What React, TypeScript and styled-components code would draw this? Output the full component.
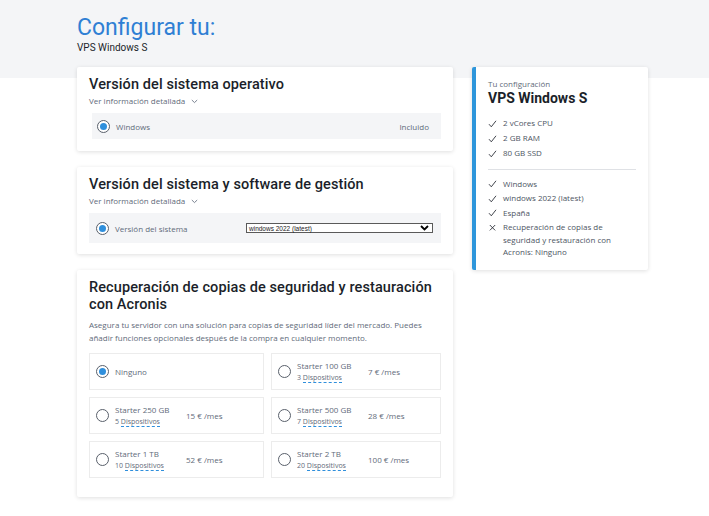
import React from "react";
import styled, { createGlobalStyle } from "styled-components";

const GlobalStyle = createGlobalStyle`
  html, body { margin: 0; padding: 0; background: #ffffff; }
  body { font-family: "Open Sans", "Noto Sans", sans-serif; color: #1b1f2a; }
  * { box-sizing: border-box; }
`;

const Page = styled.div`
  width: 709px;
  min-height: 516px;
`;

const Hero = styled.header`
  height: 78px;
  background: #f4f5f7;
  padding: 14px 0 0 77px;
`;

const HeroTitle = styled.h1`
  margin: 0;
  font-family: Roboto, "Noto Sans", sans-serif;
  font-weight: 400;
  font-size: 23px;
  line-height: 28px;
  color: #2f7fd4;
`;

const HeroSub = styled.div`
  font-family: Roboto, "Noto Sans", sans-serif;
  font-size: 10px;
  line-height: 12px;
  color: #1b1f2a;
`;

const Main = styled.main`
  display: flex;
  align-items: flex-start;
  gap: 19px;
  margin-top: -11px;
  padding-left: 77px;
`;

const LeftCol = styled.div`
  width: 376px;
  display: flex;
  flex-direction: column;
  gap: 16px;
`;

const Card = styled.section<{ $bottom?: number }>`
  background: #fff;
  border-radius: 2px;
  box-shadow: 0 1px 4px rgba(0, 0, 0, 0.13);
  padding: 9px 12px ${(p) => p.$bottom ?? 12}px 12px;
`;

const CardTitle = styled.h2`
  margin: 0;
  font-family: Roboto, "Noto Sans", sans-serif;
  font-weight: 500;
  font-size: 14.5px;
  line-height: 17px;
  color: #1b1f2a;
  letter-spacing: 0.1px;
`;

const InfoToggle = styled.div`
  margin-top: 2px;
  display: flex;
  align-items: center;
  gap: 6px;
  font-size: 8px;
  line-height: 12px;
  color: #5f6b7a;
`;

const OptionRow = styled.div<{ $indent?: number; $height: number; $padLeft: number }>`
  margin-top: 6px;
  margin-left: ${(p) => p.$indent ?? 0}px;
  height: ${(p) => p.$height}px;
  background: #f4f5f7;
  display: flex;
  align-items: center;
  gap: 6px;
  padding: 0 12px 0 ${(p) => p.$padLeft}px;
  font-size: 8px;
  color: #5f6b7a;
`;

const RightText = styled.span`
  margin-left: auto;
`;

const RadioOuter = styled.span<{ $checked?: boolean }>`
  flex: none;
  width: 13px;
  height: 13px;
  border-radius: 50%;
  border: 1.3px solid #59606b;
  background: #fff;
  display: flex;
  align-items: center;
  justify-content: center;
  &::after {
    content: "";
    width: 7px;
    height: 7px;
    border-radius: 50%;
    background: ${(p) => (p.$checked ? "#2f8fdc" : "transparent")};
  }
`;

const SelectBox = styled.div`
  margin-left: auto;
  margin-right: -4px;
  width: 187px;
  height: 10px;
  border: 1px solid #5a5a5a;
  background: #fff;
  display: flex;
  align-items: center;
  justify-content: space-between;
  padding: 0 3px 0 2px;
  font-family: "Liberation Sans", Arial, sans-serif;
  font-size: 6.5px;
  color: #222;
`;

const Description = styled.p`
  margin: 6px 0 0;
  font-size: 8px;
  line-height: 12.5px;
  color: #5f6b7a;
`;

const Grid = styled.div`
  margin-top: 9px;
  display: grid;
  grid-template-columns: 175fr 170fr;
  gap: 7px;
`;

const Choice = styled.div`
  height: 37px;
  border: 1px solid #ececec;
  display: flex;
  align-items: center;
  gap: 6px;
  padding-left: 6px;
  font-size: 8px;
  color: #5f6b7a;
`;

const ChoiceLabel = styled.div`
  width: 65px;
  display: flex;
  flex-direction: column;
`;

const ChoiceName = styled.span`
  font-size: 8px;
  line-height: 12px;
`;

const ChoiceMeta = styled.span`
  font-size: 7px;
  line-height: 11px;
  white-space: nowrap;
`;

const Devices = styled.span`
  border-bottom: 1px dashed #2f8fdc;
`;

const Price = styled.span`
  font-size: 8px;
`;

const Summary = styled.aside`
  width: 176px;
  background: #fff;
  border-left: 4px solid #2e96db;
  border-radius: 2px;
  box-shadow: 0 1px 4px rgba(0, 0, 0, 0.13);
  padding: 11px 12px 11px 12px;
`;

const SummaryKicker = styled.div`
  font-size: 8px;
  line-height: 12px;
  color: #5f6b7a;
`;

const SummaryTitle = styled.div`
  font-family: Roboto, "Noto Sans", sans-serif;
  font-weight: 700;
  font-size: 14px;
  line-height: 17px;
  color: #1b1f2a;
`;

const SummaryList = styled.ul<{ $top: number; $gap: number }>`
  list-style: none;
  margin: ${(p) => p.$top}px 0 0;
  padding: 0;
  display: flex;
  flex-direction: column;
  gap: ${(p) => p.$gap}px;
`;

const SummaryItem = styled.li`
  display: flex;
  align-items: flex-start;
  gap: 6px;
  font-size: 8px;
  line-height: 12.5px;
  color: #4d5563;
  svg { flex: none; margin-top: 2.5px; }
`;

const Divider = styled.hr`
  margin: 9px 0 0;
  border: none;
  border-top: 1px solid #dfe1e5;
`;

const Check = () => (
  <svg width="9" height="8" viewBox="0 0 9 8">
    <polyline points="1,4.2 3.3,6.8 8,0.8" fill="none" stroke="#2b2f38" strokeWidth="0.9" />
  </svg>
);

const Cross = () => (
  <svg width="9" height="8" viewBox="0 0 9 8">
    <path d="M1.8 1 L7.2 6.4 M7.2 1 L1.8 6.4" fill="none" stroke="#2b2f38" strokeWidth="0.9" />
  </svg>
);

const SmallChevron = () => (
  <svg width="7" height="5" viewBox="0 0 7 5">
    <polyline points="0.8,1 3.5,3.6 6.2,1" fill="none" stroke="#6b7584" strokeWidth="0.9" />
  </svg>
);

const SelectChevron = () => (
  <svg width="9" height="6" viewBox="0 0 9 6">
    <polyline points="1,1 4.5,4.5 8,1" fill="none" stroke="#000" strokeWidth="1.8" />
  </svg>
);

type Plan = { name: string; devices?: string; price?: string; checked?: boolean };

const plans: Plan[] = [
  { name: "Ninguno", checked: true },
  { name: "Starter 100 GB", devices: "3", price: "7 € /mes" },
  { name: "Starter 250 GB", devices: "5", price: "15 € /mes" },
  { name: "Starter 500 GB", devices: "7", price: "28 € /mes" },
  { name: "Starter 1 TB", devices: "10", price: "52 € /mes" },
  { name: "Starter 2 TB", devices: "20", price: "100 € /mes" },
];

export default function App() {
  return (
    <Page>
      <GlobalStyle />
      <Hero>
        <HeroTitle>Configurar tu:</HeroTitle>
        <HeroSub>VPS Windows S</HeroSub>
      </Hero>
      <Main>
        <LeftCol>
          <Card>
            <CardTitle>Versión del sistema operativo</CardTitle>
            <InfoToggle>
              Ver información detallada <SmallChevron />
            </InfoToggle>
            <OptionRow $indent={3} $height={26} $padLeft={5}>
              <RadioOuter $checked />
              Windows
              <RightText>Incluido</RightText>
            </OptionRow>
          </Card>
          <Card $bottom={11}>
            <CardTitle>Versión del sistema y software de gestión</CardTitle>
            <InfoToggle>
              Ver información detallada <SmallChevron />
            </InfoToggle>
            <OptionRow $height={30} $padLeft={7}>
              <RadioOuter $checked />
              Versión del sistema
              <SelectBox>
                <span>windows 2022 (latest)</span>
                <SelectChevron />
              </SelectBox>
            </OptionRow>
          </Card>
          <Card $bottom={19}>
            <CardTitle>Recuperación de copias de seguridad y restauración con Acronis</CardTitle>
            <Description>
              Asegura tu servidor con una solución para copias de seguridad líder del mercado. Puedes
              añadir funciones opcionales después de la compra en cualquier momento.
            </Description>
            <Grid>
              {plans.map((p) => (
                <Choice key={p.name}>
                  <RadioOuter $checked={p.checked} />
                  {p.devices ? (
                    <>
                      <ChoiceLabel>
                        <ChoiceName>{p.name}</ChoiceName>
                        <ChoiceMeta>
                          {p.devices} <Devices>Dispositivos</Devices>
                        </ChoiceMeta>
                      </ChoiceLabel>
                      <Price>{p.price}</Price>
                    </>
                  ) : (
                    <ChoiceName>{p.name}</ChoiceName>
                  )}
                </Choice>
              ))}
            </Grid>
          </Card>
        </LeftCol>
        <Summary>
          <SummaryKicker>Tu configuración</SummaryKicker>
          <SummaryTitle>VPS Windows S</SummaryTitle>
          <SummaryList $top={10} $gap={2.5}>
            <SummaryItem><Check />2 vCores CPU</SummaryItem>
            <SummaryItem><Check />2 GB RAM</SummaryItem>
            <SummaryItem><Check />80 GB SSD</SummaryItem>
          </SummaryList>
          <Divider />
          <SummaryList $top={8} $gap={2.1}>
            <SummaryItem><Check />Windows</SummaryItem>
            <SummaryItem><Check />windows 2022 (latest)</SummaryItem>
            <SummaryItem><Check />España</SummaryItem>
            <SummaryItem><Cross />Recuperación de copias de seguridad y restauración con Acronis: Ninguno</SummaryItem>
          </SummaryList>
        </Summary>
      </Main>
    </Page>
  );
}
